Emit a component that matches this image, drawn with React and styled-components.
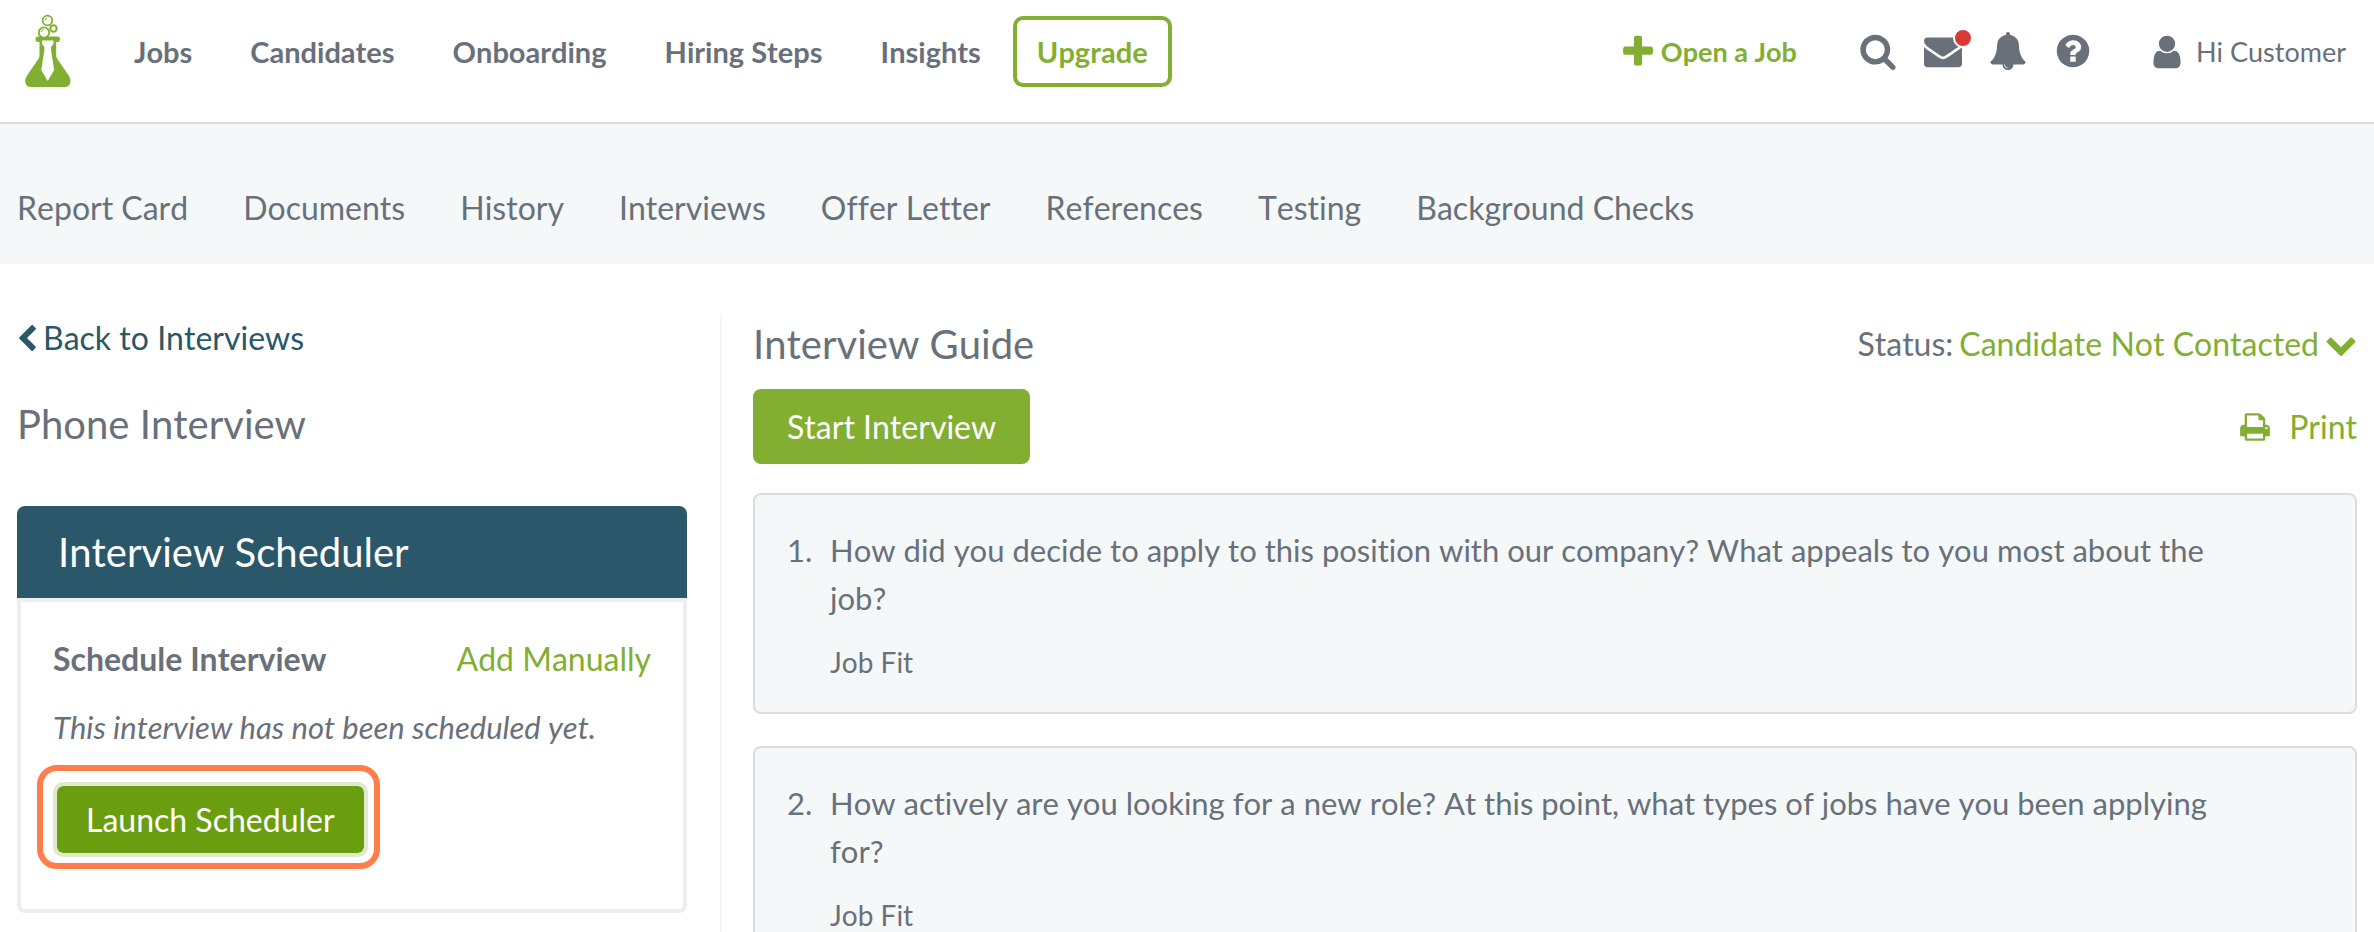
import React from 'react';
import styled, { createGlobalStyle, css } from 'styled-components';

const ink = '#69707a';
const green = '#82ae32';
const teal = '#2a5769';
const pale = '#f4f8f9';
const line = '#dcdcdc';

const GlobalStyle = createGlobalStyle`
  *, *::before, *::after { box-sizing: border-box; }
  body {
    margin: 0;
    background: #fff;
    color: ${ink};
    font-family: Lato, "Liberation Sans", sans-serif;
    font-size: 32px;
    line-height: 48px;
    font-kerning: none;
    font-variant-ligatures: none;
    overflow-x: hidden;
  }
  h1, h2, h3, p, ol, ul { margin: 0; padding: 0; font-weight: 400; }
  a { color: inherit; text-decoration: none; }
  button { font: inherit; font-kerning: inherit; cursor: pointer; }
`;

const ICONS = {
  search: 'M1216 832q0-185-131.5-316.5t-316.5-131.5-316.5 131.5-131.5 316.5 131.5 316.5 316.5 131.5 316.5-131.5 131.5-316.5zm512 832q0 52-38 90t-90 38q-54 0-90-38l-343-342q-179 124-399 124-143 0-273.5-55.5t-225-150-150-225-55.5-273.5 55.5-273.5 150-225 225-150 273.5-55.5 273.5 55.5 225 150 150 225 55.5 273.5q0 220-124 399l343 343q37 37 37 90z',
  envelope: 'M1792 710v794q0 66-47 113t-113 47h-1472q-66 0-113-47t-47-113v-794q44 49 101 87 362 246 497 345 57 42 92.5 65.5t94.5 48 110 24.5h2q51 0 110-24.5t94.5-48 92.5-65.5q170-123 498-345 57-39 100-87zm0-294q0 79-49 151t-122 123q-376 261-468 325-10 7-42.5 31t-54 38.5-52 32.5-57.5 27-50 9h-2q-23 0-50-9t-57.5-27-52-32.5-54-38.5-42.5-31q-91-64-262-182.5t-205-142.5q-62-42-117-115.5t-55-136.5q0-78 41.5-130t118.5-52h1472q65 0 112.5 47t47.5 113z',
  bell: 'M912 1696q0-16-16-16-59 0-101.5-42.5t-42.5-101.5q0-16-16-16t-16 16q0 73 51.5 124.5t124.5 51.5q16 0 16-16zm816-288q0 52-38 90t-90 38h-448q0 106-75 181t-181 75-181-75-75-181h-448q-52 0-90-38t-38-90q50-42 91-88t85-119.5 74.5-158.5 50-206 19.5-260q0-152 117-282.5t307-158.5q-8-19-8-39 0-40 28-68t68-28 68 28 28 68q0 20-8 39 190 28 307 158.5t117 282.5q0 139 19.5 260t50 206 74.5 158.5 85 119.5 91 88z',
  help: 'M1024 1376v-192q0-14-9-23t-23-9h-192q-14 0-23 9t-9 23v192q0 14 9 23t23 9h192q14 0 23-9t9-23zm256-672q0-88-55.5-163t-138.5-116-170-41q-243 0-371 213-15 24 8 42l132 100q7 6 19 6 16 0 25-12 53-68 86-92 34-24 86-24 48 0 85.5 26t37.5 59q0 38-20 61t-68 45q-63 28-115.5 86.5t-52.5 125.5v36q0 14 9 23t23 9h192q14 0 23-9t9-23q0-19 21.5-49.5t54.5-49.5q32-18 49-28.5t46-35 44.5-48 28-60.5 12.5-81zm384 192q0 209-103 385.5t-279.5 279.5-385.5 103-385.5-103-279.5-279.5-103-385.5 103-385.5 279.5-279.5 385.5-103 385.5 103 279.5 279.5 103 385.5z',
  plus: 'M1600 736v192q0 40-28 68t-68 28h-416v416q0 40-28 68t-68 28h-192q-40 0-68-28t-28-68v-416h-416q-40 0-68-28t-28-68v-192q0-40 28-68t68-28h416v-416q0-40 28-68t68-28h192q40 0 68 28t28 68v416h416q40 0 68 28t28 68z',
  user: 'M1536 1399q0 109-62.5 187t-150.5 78h-854q-88 0-150.5-78t-62.5-187q0-85 8.5-160.5t31.5-152 58.5-131 94-89 134.5-34.5q131 128 313 128t313-128q76 0 134.5 34.5t94 89 58.5 131 31.5 152 8.5 160.5zm-256-887q0 159-112.5 271.5t-271.5 112.5-271.5-112.5-112.5-271.5 112.5-271.5 271.5-112.5 271.5 112.5 112.5 271.5z',
  print: 'M448 1536h896v-256h-896v256zm0-640h896v-384h-160q-40 0-68-28t-28-68v-160h-640v640zm1152 64q0-26-19-45t-45-19-45 19-19 45 19 45 45 19 45-19 19-45zm128 0v416q0 13-9.5 22.5t-22.5 9.5h-224v160q0 40-28 68t-68 28h-960q-40 0-68-28t-28-68v-160h-224q-13 0-22.5-9.5t-9.5-22.5v-416q0-79 56.5-135.5t135.5-56.5h64v-544q0-40 28-68t68-28h672q40 0 88 20t76 48l152 152q28 28 48 76t20 88v256h64q79 0 135.5 56.5t56.5 135.5z',
  left: 'M1427 301l-531 531 531 531q19 19 19 45t-19 45l-166 166q-19 19-45 19t-45-19l-742-742q-19-19-19-45t19-45l742-742q19-19 45-19t45 19l166 166q19 19 19 45t-19 45z',
  down: 'M1683 808l-742 741q-19 19-45 19t-45-19l-742-741q-19-19-19-45.5t19-45.5l166-165q19-19 45-19t45 19l531 531 531-531q19-19 45-19t45 19l166 165q19 19 19 45.5t-19 45.5z',
};

const Glyph = styled.svg`
  display: block;
  flex: none;
  width: ${(p) => p.$width}px;
  height: ${(p) => p.$height}px;
  fill: currentColor;
`;

function Icon({ name, size = 38, width = size, box = '0 0 1792 1792' }) {
  return (
    <Glyph $width={width} $height={size} viewBox={box} aria-hidden="true">
      <path d={ICONS[name]} />
    </Glyph>
  );
}

const TopBar = styled.header`
  display: flex;
  align-items: flex-start;
  min-height: 124px;
  padding: 16px 28px 0 24px;
  border-bottom: 2px solid ${line};
`;

const LogoLink = styled.a`
  display: block;
  width: 48px;
  svg { display: block; overflow: visible; }
`;

const MainNav = styled.nav`
  display: flex;
  align-items: center;
  margin-left: 62px;
  gap: 58px;
  font-size: 29px;
  font-weight: 700;
  white-space: nowrap;
`;

const Upgrade = styled.a`
  display: flex;
  align-items: center;
  height: 71px;
  margin-left: -26px;
  padding: 0 20px;
  border: 4px solid ${green};
  border-radius: 10px;
  color: ${green};
`;

const Tools = styled.div`
  display: flex;
  align-items: center;
  height: 72px;
  margin-left: auto;
  font-size: 27px;
  white-space: nowrap;
`;

const OpenJob = styled.a`
  display: flex;
  align-items: center;
  gap: 4px;
  margin-right: 62px;
  color: ${green};
  font-weight: 700;
`;

const IconGroup = styled.div`
  display: flex;
  align-items: center;
  gap: 27px;
  margin-right: 56px;
  padding-bottom: 2px;
`;

const IconButton = styled.button`
  position: relative;
  display: block;
  padding: 0;
  border: 0;
  background: none;
  color: ${ink};
`;

const Dot = styled.span`
  position: absolute;
  top: -4px;
  right: -11px;
  width: 20px;
  height: 20px;
  border: 2px solid #fff;
  border-radius: 50%;
  background: #d93a37;
`;

const Account = styled.a`
  display: flex;
  align-items: center;
  gap: 10px;
`;

const SubNav = styled.nav`
  display: flex;
  align-items: center;
  gap: 55px;
  height: 140px;
  padding: 28px 17px 0;
  background: ${pale};
  white-space: nowrap;
`;

const Page = styled.main`
  display: grid;
  grid-template-columns: minmax(0, 705fr) minmax(0, 1635fr);
  padding: 50px 17px 0;
`;

const Side = styled.aside`
  padding-right: 33px;
  border-right: 2px solid #f6f6f6;
`;

const BackLink = styled.a`
  display: flex;
  align-items: center;
  gap: 7px;
  padding-left: 2px;
  color: ${teal};
`;

const Title = styled.h1`
  margin-top: 36px;
  font-size: 40px;
  line-height: 52px;
`;

const Panel = styled.section`
  margin-top: 56px;
`;

const PanelHead = styled.h2`
  padding: 20px 41px;
  border-radius: 8px 8px 0 0;
  background: ${teal};
  color: #fff;
  font-size: 40px;
  line-height: 52px;
`;

const PanelBody = styled.div`
  padding: 33px 32px 40px;
  border: 4px solid #eee;
  border-radius: 0 0 8px 8px;
`;

const Spread = styled.div`
  display: flex;
  align-items: center;
  justify-content: space-between;
`;

const PanelLabel = styled.h3`
  font-size: 32px;
  font-weight: 700;
`;

const GreenLink = styled.a`
  display: flex;
  align-items: center;
  gap: ${(p) => p.$gap || 0}px;
  color: ${green};
`;

const Note = styled.p`
  margin-top: 20px;
  font-size: 31px;
  font-style: italic;
`;

const Highlight = styled.div`
  width: max-content;
  margin: 14px 0 0 -16px;
  padding: 11px 6px 6px 10px;
  border: 6px solid #ff7d4b;
  border-radius: 20px;
`;

const Button = styled.button`
  display: block;
  height: 75px;
  padding: 0 34px;
  border: 0;
  border-radius: 8px;
  background: ${green};
  color: #fff;
  ${(p) => p.$focused && css`
    padding: 0 29px;
    border: 4px solid #dfe9cd;
    background: #6a9e10;
    background-clip: padding-box;
    border-radius: 10px;
  `}
`;

const Guide = styled.section`
  padding-left: 31px;
`;

const GuideHead = styled(Spread)`
  height: 60px;
`;

const GuideTitle = styled.h2`
  font-size: 40px;
  line-height: 52px;
`;

const Status = styled.div`
  display: flex;
  align-items: center;
  gap: 6px;
`;

const Actions = styled(Spread)`
  margin-top: 15px;
`;

const Questions = styled.ol`
  display: grid;
  gap: 32px;
  margin-top: 29px;
  list-style: none;
`;

const Question = styled.li`
  display: flex;
  padding: 31px 120px 26px 32px;
  border: 2px solid ${line};
  border-radius: 8px;
  background: ${pale};
  font-size: 31px;
`;

const Number = styled.span`
  flex: none;
  width: 43px;
`;

const Tag = styled.p`
  margin-top: 16px;
  font-size: 28px;
`;

function Logo() {
  return (
    <svg width="48" height="72" viewBox="0 0 48 72" aria-hidden="true">
      <path fill={green} d="M14.500 20.500h19q2.500 0 2.500 2.700t-2.500 2.800h-1.300v13.500q0 2 1.500 4l11 16q3 5 1 9-1.500 2.500-5 2.500H7q-3.500 0-5-2.500-2-4 1-9l11-16q1.500-2 1.500-4V26h-1q-3-.200-3-2.800t3-2.700z" />
      <path fill="#fff" d="M18 24.500h11.500q.800 3.500-2.500 6.500v3l3.200 20-6.500 11-6.500-11 3.200-20v-3q-3.200-3-2.400-6.500z" />
      <g fill="#fff" stroke={green}>
        <circle cx="29.500" cy="12.500" r="3.200" strokeWidth="2" />
        <circle cx="23.500" cy="4.500" r="4.800" strokeWidth="1.800" />
        <circle cx="20" cy="16.500" r="5.200" strokeWidth="1.800" />
      </g>
      <g fill="none" stroke={green} strokeWidth="1">
        <path d="M21 4.500q.300-2 2.200-2.400" />
        <path d="M17.300 16q.500-2.200 2.500-2.500" />
      </g>
    </svg>
  );
}

const MAIN_LINKS = ['Jobs', 'Candidates', 'Onboarding', 'Hiring Steps', 'Insights'];
const SUB_LINKS = ['Report Card', 'Documents', 'History', 'Interviews', 'Offer Letter', 'References', 'Testing', 'Background Checks'];
const QUESTIONS = [
  { text: 'How did you decide to apply to this position with our company? What appeals to you most about the job?', tag: 'Job Fit' },
  { text: 'How actively are you looking for a new role? At this point, what types of jobs have you been applying for?', tag: 'Job Fit' },
];

export default function App() {
  return (
    <>
      <GlobalStyle />
      <TopBar>
        <LogoLink href="#" aria-label="Home"><Logo /></LogoLink>
        <MainNav>
          {MAIN_LINKS.map((label) => <a href="#" key={label}>{label}</a>)}
          <Upgrade href="#">Upgrade</Upgrade>
        </MainNav>
        <Tools>
          <OpenJob href="#"><Icon name="plus" />Open a Job</OpenJob>
          <IconGroup>
            <IconButton aria-label="Search"><Icon name="search" /></IconButton>
            <IconButton aria-label="Messages"><Icon name="envelope" /><Dot /></IconButton>
            <IconButton aria-label="Notifications"><Icon name="bell" /></IconButton>
            <IconButton aria-label="Help"><Icon name="help" /></IconButton>
          </IconGroup>
          <Account href="#"><Icon name="user" />Hi Customer</Account>
        </Tools>
      </TopBar>
      <SubNav>
        {SUB_LINKS.map((label) => <a href="#" key={label}>{label}</a>)}
      </SubNav>
      <Page>
        <Side>
          <BackLink href="#"><Icon name="left" size={26} width={17} box="400 32 1056 1600" />Back to Interviews</BackLink>
          <Title>Phone Interview</Title>
          <Panel>
            <PanelHead>Interview Scheduler</PanelHead>
            <PanelBody>
              <Spread>
                <PanelLabel>Schedule Interview</PanelLabel>
                <GreenLink href="#">Add Manually</GreenLink>
              </Spread>
              <Note>This interview has not been scheduled yet.</Note>
              <Highlight>
                <Button type="button" $focused>Launch Scheduler</Button>
              </Highlight>
            </PanelBody>
          </Panel>
        </Side>
        <Guide>
          <GuideHead>
            <GuideTitle>Interview Guide</GuideTitle>
            <Status>
              Status:
              <GreenLink href="#" $gap={6}>Candidate Not Contacted<Icon name="down" size={32} /></GreenLink>
            </Status>
          </GuideHead>
          <Actions>
            <Button type="button">Start Interview</Button>
            <GreenLink href="#" $gap={18}><Icon name="print" size={32} />Print</GreenLink>
          </Actions>
          <Questions>
            {QUESTIONS.map((q, i) => (
              <Question key={q.text}>
                <Number>{i + 1}.</Number>
                <div>
                  <p>{q.text}</p>
                  <Tag>{q.tag}</Tag>
                </div>
              </Question>
            ))}
          </Questions>
        </Guide>
      </Page>
    </>
  );
}
